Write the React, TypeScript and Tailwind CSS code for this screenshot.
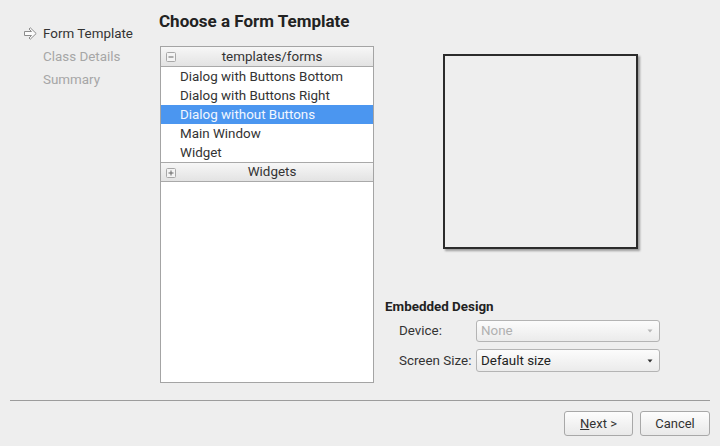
import React from "react";

const ArrowIcon = () => (
  <svg width="16" height="13" viewBox="0 0 16 13">
    <path
      d="M1.5 4.5H8.5L6 2L7.3 0.8L13.2 6.5L7.3 12.2L6 11L8.5 8.5H1.5Z"
      fill="#fbfbfb"
      stroke="#8c8c8c"
      strokeWidth="1"
      strokeLinejoin="round"
    />
  </svg>
);

const ToggleBox = ({ open }: { open: boolean }) => (
  <svg width="10" height="10" viewBox="0 0 10 10">
    <rect x="0.5" y="0.5" width="9" height="9" rx="1" fill="#f4f4f4" stroke="#a8a8a8" />
    <path d="M2.5 5H7.5" stroke="#666" strokeWidth="1" />
    {!open && <path d="M5 2.5V7.5" stroke="#666" strokeWidth="1" />}
  </svg>
);

const DownTriangle = ({ color }: { color: string }) => (
  <svg width="6" height="4" viewBox="0 0 6 4">
    <path d="M0.5 0.5H5.5L3 3.5Z" fill={color} />
  </svg>
);

type GroupProps = { title: string; open: boolean; top?: boolean };

const GroupHeader = ({ title, open, top }: GroupProps) => (
  <div
    className={
      "relative flex h-[20px] items-center justify-center border-b border-[#a9a9a9] bg-gradient-to-b from-[#f7f7f7] to-[#e3e3e3] pl-[10px] text-[#333] " +
      (top ? "" : "border-t")
    }
  >
    <span className="absolute left-[5px] top-[5px] flex">
      <ToggleBox open={open} />
    </span>
    <span>{title}</span>
  </div>
);

const templates = [
  "Dialog with Buttons Bottom",
  "Dialog with Buttons Right",
  "Dialog without Buttons",
  "Main Window",
  "Widget",
];

const Combo = ({ text, disabled }: { text: string; disabled?: boolean }) => (
  <div
    className={
      "flex w-[184px] items-center justify-between rounded-[3px] border border-[#b4b4b4] bg-gradient-to-b from-[#fcfcfc] to-[#ebebeb] pl-[4px] pr-[6px] " +
      (disabled ? "h-[22px] text-[#b0b0b0]" : "h-[23px] text-[#222]")
    }
  >
    <span>{text}</span>
    <DownTriangle color={disabled ? "#b8b8b8" : "#333"} />
  </div>
);

export default function App() {
  const selected = 2;

  return (
    <div
      className="flex h-[446px] w-[720px] flex-col overflow-hidden bg-[#eeeeee] text-[13.4px] leading-[16px] text-[#2a2a2a]"
      style={{ fontFamily: "Roboto, 'Liberation Sans', sans-serif" }}
    >
      <div className="flex h-[400px]">
        {/* wizard steps */}
        <div className="w-[159px] shrink-0 pt-[22px]">
          <div className="flex h-[23px] items-center">
            <span className="ml-[23px] mr-[4px] flex">
              <ArrowIcon />
            </span>
            <span className="text-[#333]">Form Template</span>
          </div>
          <div className="flex h-[23px] items-center pl-[43px] text-[#a6a6a6]">Class Details</div>
          <div className="flex h-[23px] items-center pl-[43px] text-[#a6a6a6]">Summary</div>
        </div>

        {/* page */}
        <div className="flex flex-1 flex-col">
          <div className="mt-[11px] h-[20px] text-[17px] font-bold leading-[20px] text-[#222]">
            Choose a Form Template
          </div>
          <div className="mt-[15px] flex h-[337px] pl-[1px]">
            <div className="flex w-[214px] flex-col border border-[#a4a4a4] bg-white">
              <GroupHeader title="templates/forms" open top />
              {templates.map((t, i) => (
                <div
                  key={t}
                  className={
                    "flex h-[19px] items-center pl-[19px] " +
                    (i === selected ? "bg-[#4b96f0] text-[#f2f7ff]" : "text-[#333]")
                  }
                >
                  {t}
                </div>
              ))}
              <GroupHeader title="Widgets" open={false} />
            </div>

            <div className="ml-[11px] flex flex-1 flex-col">
              <div className="ml-[58px] mt-[8px] h-[195px] w-[195px] border-2 border-[#2b2b2b] bg-[#eeeeee] shadow-[2px_2px_2px_rgba(0,0,0,0.35)]" />
              <div className="mt-auto pb-[11px]">
                <div className="font-bold text-[#222]">Embedded Design</div>
                <div className="mt-[5px] flex items-center pl-[14px]">
                  <span className="w-[77px] text-[#333]">Device:</span>
                  <Combo text="None" disabled />
                </div>
                <div className="mt-[7px] flex items-center pl-[14px]">
                  <span className="w-[77px] text-[#333]">Screen Size:</span>
                  <Combo text="Default size" />
                </div>
              </div>
            </div>
          </div>
        </div>
      </div>

      <div className="mx-[10px] h-px bg-[#9c9c9c]" />

      <div className="flex justify-end gap-[7px] pr-[10px] pt-[10px] text-[13px]">
        <button className="flex h-[25px] w-[69px] items-center justify-center rounded-[3px] border border-[#a8a8a8] bg-gradient-to-b from-[#fdfdfd] to-[#e9e9e9] text-[#333]">
          <span>
            <span className="underline">N</span>ext &gt;
          </span>
        </button>
        <button className="flex h-[25px] w-[70px] items-center justify-center rounded-[3px] border border-[#a8a8a8] bg-gradient-to-b from-[#fdfdfd] to-[#e9e9e9] text-[#333]">
          Cancel
        </button>
      </div>
    </div>
  );
}
